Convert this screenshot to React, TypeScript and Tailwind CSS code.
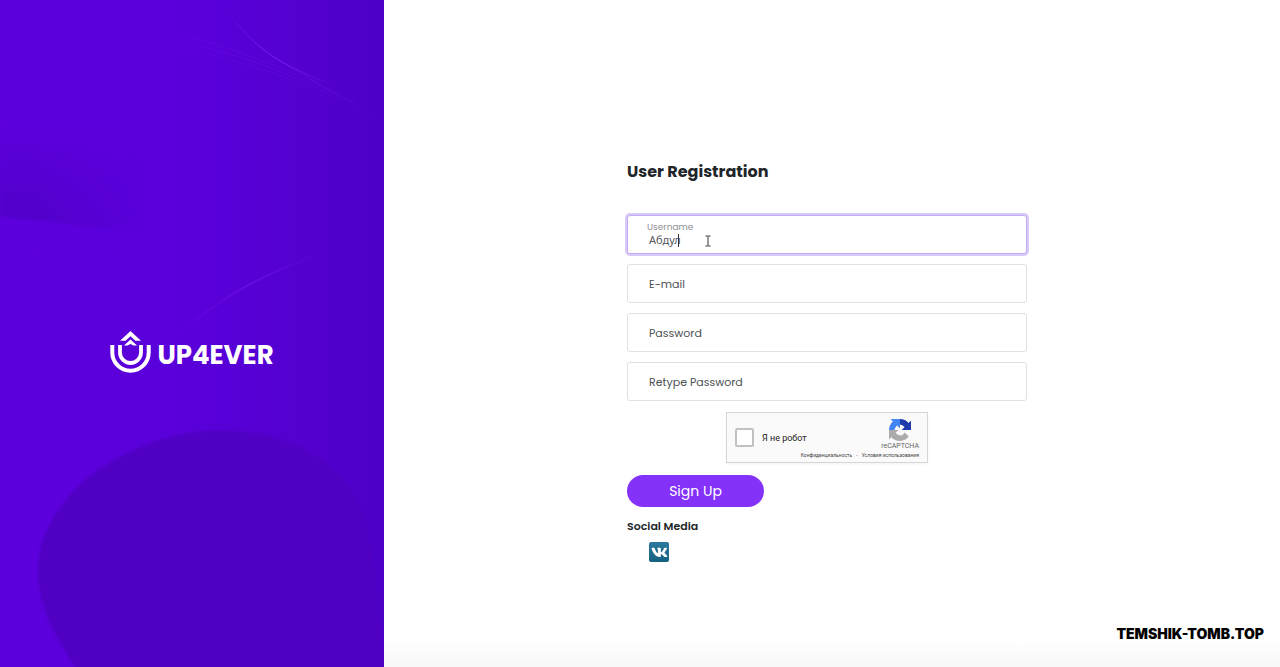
import React from "react";

function PanelArt() {
  return (
    <svg
      className="absolute inset-0 h-full w-full"
      viewBox="0 0 384 667"
      preserveAspectRatio="none"
      aria-hidden="true"
    >
      <defs>
        <linearGradient id="base" x1="0" x2="1" y1="0" y2="0">
          <stop offset="0" stopColor="#5d00de" />
          <stop offset="0.55" stopColor="#5900d9" />
          <stop offset="0.85" stopColor="#5200cd" />
          <stop offset="1" stopColor="#4c00c6" />
        </linearGradient>
        <linearGradient id="wave" x1="0.1" x2="0" y1="0" y2="1">
          <stop offset="0.3" stopColor="#4e00c4" stopOpacity="0" />
          <stop offset="1" stopColor="#4e00c4" stopOpacity="0.9" />
        </linearGradient>
        <linearGradient id="waveFade" x1="0" x2="1" y1="0" y2="0">
          <stop offset="0.2" stopColor="#fff" />
          <stop offset="0.85" stopColor="#000" />
        </linearGradient>
        <mask id="waveMask">
          <rect x="0" y="60" width="170" height="180" fill="url(#waveFade)" />
        </mask>
        <linearGradient id="streak" x1="0" x2="1" y1="0" y2="0">
          <stop offset="0" stopColor="#7d1cec" stopOpacity="0" />
          <stop offset="0.5" stopColor="#7d1cec" stopOpacity="0.85" />
          <stop offset="1" stopColor="#7d1cec" stopOpacity="0" />
        </linearGradient>
        <filter id="soft">
          <feGaussianBlur stdDeviation="1.5" />
        </filter>
      </defs>
      <rect width="384" height="667" fill="url(#base)" />
      <path d="M0 70H170V232C110 232 50 220 0 217Z" fill="url(#wave)" mask="url(#waveMask)" filter="url(#soft)" />
      <path
        d="M80 675C62 645 38 615 38 569C38 520 80 476 125 454C165 434 205 428 240 431C290 435 335 460 356 495C372 520 378 600 384 675Z"
        fill="#4f00c3"
        filter="url(#soft)"
      />
      <g fill="none" stroke="url(#streak)">
        <path d="M222 5C256 50 276 64 340 88" strokeWidth="1.2" />
        <path d="M232 20C262 54 290 68 384 120" strokeWidth="1" opacity="0.5" />
        <path d="M120 10C180 40 260 45 384 122" strokeWidth="0.6" opacity="0.5" />
        <path d="M130 24C190 50 280 52 384 130" strokeWidth="0.6" opacity="0.5" />
        <path d="M140 36C200 58 290 58 384 138" strokeWidth="0.6" opacity="0.4" />
        <path d="M180 334C215 300 260 275 320 254" strokeWidth="2" opacity="0.5" />
      </g>
    </svg>
  );
}

function Logo() {
  return (
    <div className="relative flex items-center gap-1.5 text-white">
      <svg width="41" height="42" viewBox="0 0 41 42" fill="none" aria-hidden="true">
        <path
          d="M2.3 14V21.5A18.2 18.2 0 0 0 38.700 21.5V14"
          stroke="currentColor"
          strokeWidth="4"
        />
        <path
          d="M10 14V21.5A10.5 10.5 0 0 0 31 21.5V14"
          stroke="currentColor"
          strokeWidth="3.8"
        />
        <path d="M20.5 0L31 9.8H25.4L20.5 5.3L15.6 9.8H10Z" fill="currentColor" />
        <path d="M20.5 8.6L27 14.4H23.4L20.5 13L17.6 14.4H14Z" fill="currentColor" />
      </svg>
      <span className="pt-1.5 text-[26px] leading-8 font-bold">UP4EVER</span>
    </div>
  );
}

function Field({ id, label, type }: { id: string; label: string; type: string }) {
  return (
    <div className="relative flex">
      <input
        id={id}
        type={type}
        className="h-[39px] w-full rounded-[3px] border border-[#dfe1e6] bg-white px-[21px] text-[11px] text-[#495057] outline-none"
      />
      <label
        htmlFor={id}
        className="pointer-events-none absolute inset-y-0 left-[22px] flex items-center text-[11px] leading-4 text-[#4c4f54]"
      >
        {label}
      </label>
    </div>
  );
}

function UsernameField() {
  return (
    <div className="relative flex">
      <input
        id="username"
        type="text"
        defaultValue="Абдул"
        className="h-[39px] w-full rounded-[3px] border border-[#c3a9f1] bg-white px-[21px] pt-2.5 font-['Noto_Sans',sans-serif] text-[11px] text-[#55585d] caret-transparent ring-2 ring-[#d9c9f8] outline-none"
      />
      <label htmlFor="username" className="absolute top-1 left-5 text-[9px] leading-4 text-[#8f8f94]">
        Username
      </label>
      <svg
        className="absolute top-[18px] left-[51px]"
        width="36"
        height="15"
        viewBox="0 0 36 15"
        fill="none"
        stroke="#333"
        aria-hidden="true"
      >
        <path d="M.5 1V14" />
        <path d="M27.5 3H29.3L30 3.5L30.7 3H32.5M30 3.5V12.5M27.5 13H29.3L30 12.5L30.7 13H32.5" />
      </svg>
    </div>
  );
}

function RecaptchaMark() {
  return (
    <svg width="22" height="22" viewBox="0 0 64 64" aria-hidden="true">
      <path
        d="M64 31.955l-.033-1.37V4.687l-7.16 7.16C50.948 4.674 42.033.093 32.05.093c-10.4 0-19.622 4.96-25.458 12.64l11.736 11.86a15.55 15.55 0 0 1 4.754-5.334c2.05-1.6 4.952-2.906 8.968-2.906.485 0 .86.057 1.135.163 4.976.393 9.288 3.14 11.828 7.124l-8.307 8.307L64 31.953"
        fill="#1c3aa9"
      />
      <path
        d="M31.862.094l-1.37.033H4.594l7.16 7.16C4.58 13.147 0 22.06 0 32.046c0 10.4 4.96 19.622 12.64 25.458L24.5 45.768a15.55 15.55 0 0 1-5.334-4.754c-1.6-2.05-2.906-4.952-2.906-8.968 0-.485.057-.86.163-1.135.393-4.976 3.14-9.288 7.124-11.828l8.307 8.307L31.86.095"
        fill="#4285f4"
      />
      <path
        d="M.001 32.045l.033 1.37v25.898l7.16-7.16c5.86 7.173 14.774 11.754 24.76 11.754 10.4 0 19.622-4.96 25.458-12.64l-11.736-11.86a15.55 15.55 0 0 1-4.754 5.334c-2.05 1.6-4.952 2.906-8.968 2.906-.485 0-.86-.057-1.135-.163-4.976-.393-9.288-3.14-11.828-7.124l8.307-8.307L.001 32.047"
        fill="#ababab"
      />
    </svg>
  );
}

function Recaptcha() {
  return (
    <div className="mx-auto flex h-[51px] w-[202px] flex-col border border-[#d6d6d6] bg-[#fafafa] px-2 font-['Roboto',sans-serif] shadow-xs">
      <div className="flex h-[38px] items-start justify-between">
        <div className="flex items-center gap-2 pt-[15px]">
          <input
            id="robot"
            type="checkbox"
            className="size-[19px] appearance-none rounded-[2px] border-2 border-[#c1c1c1] bg-white"
          />
          <label htmlFor="robot" className="text-[9px] leading-4 text-[#222]">
            Я не робот
          </label>
        </div>
        <div className="flex flex-col items-center pt-1.5">
          <RecaptchaMark />
          <span className="text-[7px] leading-[11px] text-[#666]">reCAPTCHA</span>
        </div>
      </div>
      <div className="flex justify-end gap-1 text-[5px] leading-[9px] text-[#444]">
        <a href="#privacy">Конфиденциальность</a>
        <span>-</span>
        <a href="#terms">Условия использования</a>
      </div>
    </div>
  );
}

export default function App() {
  return (
    <div className="flex min-h-screen bg-white font-['Poppins','Inter',sans-serif]">
      <aside className="relative flex w-[30%] items-center justify-center overflow-hidden bg-[#5800d8] pt-9">
        <PanelArt />
        <Logo />
      </aside>
      <main className="flex flex-1 flex-col bg-linear-to-t from-[#f7f7f7] to-white to-4% pt-40 pr-2.5">
        <form className="mx-auto flex w-full max-w-[400px] flex-col" onSubmit={(e) => e.preventDefault()}>
          <h1 className="mb-8 text-[16px] leading-[23px] font-bold text-[#212529]">
            User Registration
          </h1>
          <div className="mb-[11px] flex flex-col gap-2.5">
            <UsernameField />
            <Field id="email" label="E-mail" type="email" />
            <Field id="password" label="Password" type="password" />
            <Field id="retype" label="Retype Password" type="password" />
          </div>
          <Recaptcha />
          <button
            type="submit"
            className="mt-3 h-8 w-[137px] rounded-full bg-[#8432fa] text-[14px] text-white"
          >
            Sign Up
          </button>
          <h2 className="mt-[11px] text-[11px] leading-4 font-semibold text-[#212529]">Social Media</h2>
          <a
            href="#vk"
            aria-label="VK"
            className="mt-2 ml-[22px] flex size-5 items-center justify-center rounded-[2px] bg-linear-to-b from-[#2b7a9d] to-[#14607f] text-white"
          >
            <svg width="17" height="15" viewBox="0 0 576 512" fill="currentColor" aria-hidden="true">
              <path d="M545 117.700c3.700-12.500 0-21.700-17.800-21.700h-58.900c-15 0-21.900 7.900-25.600 16.700 0 0-30 73.100-72.400 120.500-13.700 13.700-20 18.100-27.500 18.100-3.700 0-9.400-4.400-9.400-16.900V117.700c0-15-4.200-21.700-16.600-21.700h-92.600c-9.400 0-15 7-15 13.500 0 14.200 21.200 17.500 23.400 57.500v86.800c0 19-3.400 22.500-10.900 22.500-20 0-68.600-73.400-97.400-157.400-5.800-16.300-11.500-22.900-26.600-22.900H38.200c-16.800 0-20.200 7.900-20.200 16.700 0 15.600 20 93.100 93.100 195.500C159.800 375.800 228.400 413 290.800 413c37.500 0 42.100-8.400 42.100-22.900 0-66.800-3.400-73.100 15.400-73.100 8.700 0 23.700 4.400 58.700 38.100 40 40 46.600 57.900 69 57.900h58.900c16.800 0 25.300-8.400 20.400-25-11.200-34.900-86.900-106.700-90.300-111.500-8.700-11.200-6.200-16.200 0-26.200.1-.1 72-101.300 79.400-135.600z" />
            </svg>
          </a>
        </form>
        <footer className="mt-auto -mr-2.5 flex justify-end pr-4 pb-[22px]">
          <span className="font-['Inter',sans-serif] text-[14px] leading-[22px] font-black text-black">
            TEMSHIK-TOMB.TOP
          </span>
        </footer>
      </main>
    </div>
  );
}
